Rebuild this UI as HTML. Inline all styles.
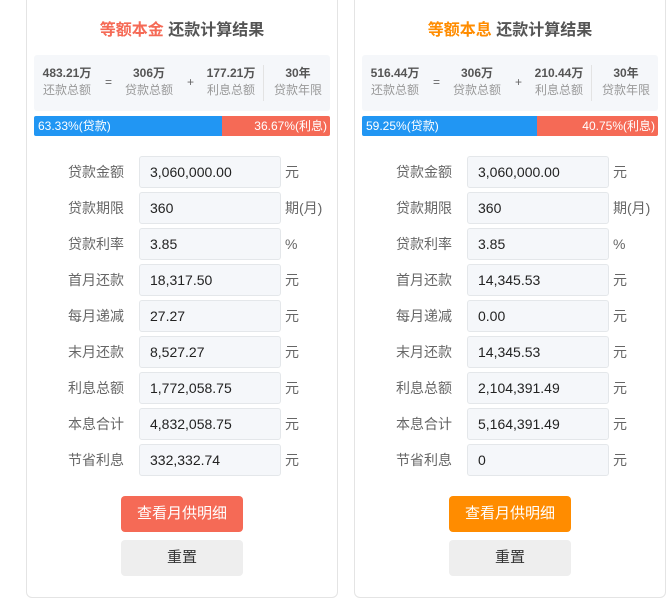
<!DOCTYPE html><html><head><meta charset="utf-8"><style>
*{margin:0;padding:0;box-sizing:border-box}
body{width:667px;height:600px;background:#fff;font-family:"Liberation Sans","Noto Sans CJK SC",sans-serif;position:relative;overflow:hidden}
.card{position:absolute;top:-6px;width:312px;height:604px;border:1px solid #e4e4e4;border-radius:6px;background:#fff}
.t{position:absolute;top:25px;left:0;width:100%;text-align:center;font-size:16px;font-weight:bold;color:#555;line-height:22px}
.sum{position:absolute;left:7px;top:60px;width:296px;height:56px;background:#f5f7fa;border-radius:3px}
.c{position:absolute;top:10px;text-align:center;width:70px;margin-left:-35px}
.c b{display:block;font-size:12px;color:#555;line-height:16px}
.c span{display:block;font-size:12px;color:#999;line-height:18px}
.op{position:absolute;top:20px;font-size:12px;color:#666}
.dv{position:absolute;left:229px;top:10px;width:1px;height:36px;background:#e3e3e3}
.bar{position:absolute;left:7px;top:121px;width:296px;height:20px;border-radius:2px;overflow:hidden;font-size:12px;color:#fff;line-height:20px}
.bar .b{position:absolute;left:0;top:0;height:20px;background:#2196f3;padding-left:4px}
.bar .r{position:absolute;right:0;top:0;height:20px;background:#f56a56;text-align:right;padding-right:3px}
.row{position:absolute;left:0;width:100%;height:32px}
.row label{position:absolute;right:213px;top:0;line-height:32px;font-size:14px;color:#666;white-space:nowrap}
.row .in{position:absolute;left:112px;width:142px;height:32px;border:1px solid #e4e7ea;border-radius:3px;background:#f5f7fa;font-size:14px;color:#222;padding-left:10px;line-height:30px}
.row .u{position:absolute;left:258px;top:0;line-height:32px;font-size:14px;color:#666}
.btn{position:absolute;left:94px;width:122px;height:36px;border-radius:4px;text-align:center;line-height:36px;font-size:15px}
</style></head><body>
<div class="card" style="left:26px">
<div class="t"><span style="color:#f56a56">等额本金</span> 还款计算结果</div>
<div class="sum">
<div class="c" style="left:33px"><b>483.21万</b><span>还款总额</span></div>
<div class="op" style="left:71px">=</div>
<div class="c" style="left:115px"><b>306万</b><span>贷款总额</span></div>
<div class="op" style="left:153px">+</div>
<div class="c" style="left:197px"><b>177.21万</b><span>利息总额</span></div>
<div class="dv"></div>
<div class="c" style="left:264px"><b>30年</b><span>贷款年限</span></div>
</div>
<div class="bar"><div class="b" style="width:188px">63.33%(贷款)</div><div class="r" style="width:108px">36.67%(利息)</div></div>
<div class="row" style="top:161px"><label>贷款金额</label><div class="in">3,060,000.00</div><div class="u">元</div></div>
<div class="row" style="top:197px"><label>贷款期限</label><div class="in">360</div><div class="u">期(月)</div></div>
<div class="row" style="top:233px"><label>贷款利率</label><div class="in">3.85</div><div class="u">%</div></div>
<div class="row" style="top:269px"><label>首月还款</label><div class="in">18,317.50</div><div class="u">元</div></div>
<div class="row" style="top:305px"><label>每月递减</label><div class="in">27.27</div><div class="u">元</div></div>
<div class="row" style="top:341px"><label>末月还款</label><div class="in">8,527.27</div><div class="u">元</div></div>
<div class="row" style="top:377px"><label>利息总额</label><div class="in">1,772,058.75</div><div class="u">元</div></div>
<div class="row" style="top:413px"><label>本息合计</label><div class="in">4,832,058.75</div><div class="u">元</div></div>
<div class="row" style="top:449px"><label>节省利息</label><div class="in">332,332.74</div><div class="u">元</div></div>
<div class="btn" style="top:501px;background:#f56a56;color:#fff">查看月供明细</div>
<div class="btn" style="top:545px;background:#eee;color:#333">重置</div>
</div>
<div class="card" style="left:354px">
<div class="t"><span style="color:#ff8c00">等额本息</span> 还款计算结果</div>
<div class="sum">
<div class="c" style="left:33px"><b>516.44万</b><span>还款总额</span></div>
<div class="op" style="left:71px">=</div>
<div class="c" style="left:115px"><b>306万</b><span>贷款总额</span></div>
<div class="op" style="left:153px">+</div>
<div class="c" style="left:197px"><b>210.44万</b><span>利息总额</span></div>
<div class="dv"></div>
<div class="c" style="left:264px"><b>30年</b><span>贷款年限</span></div>
</div>
<div class="bar"><div class="b" style="width:175px">59.25%(贷款)</div><div class="r" style="width:121px">40.75%(利息)</div></div>
<div class="row" style="top:161px"><label>贷款金额</label><div class="in">3,060,000.00</div><div class="u">元</div></div>
<div class="row" style="top:197px"><label>贷款期限</label><div class="in">360</div><div class="u">期(月)</div></div>
<div class="row" style="top:233px"><label>贷款利率</label><div class="in">3.85</div><div class="u">%</div></div>
<div class="row" style="top:269px"><label>首月还款</label><div class="in">14,345.53</div><div class="u">元</div></div>
<div class="row" style="top:305px"><label>每月递减</label><div class="in">0.00</div><div class="u">元</div></div>
<div class="row" style="top:341px"><label>末月还款</label><div class="in">14,345.53</div><div class="u">元</div></div>
<div class="row" style="top:377px"><label>利息总额</label><div class="in">2,104,391.49</div><div class="u">元</div></div>
<div class="row" style="top:413px"><label>本息合计</label><div class="in">5,164,391.49</div><div class="u">元</div></div>
<div class="row" style="top:449px"><label>节省利息</label><div class="in">0</div><div class="u">元</div></div>
<div class="btn" style="top:501px;background:#ff8c00;color:#fff">查看月供明细</div>
<div class="btn" style="top:545px;background:#eee;color:#333">重置</div>
</div>
</body></html>
